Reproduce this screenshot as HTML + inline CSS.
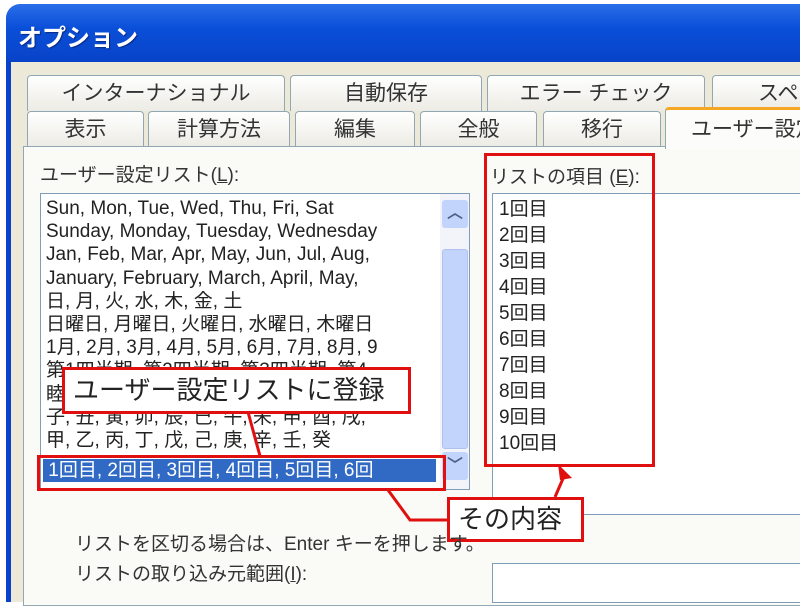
<!DOCTYPE html>
<html><head><meta charset="utf-8"><style>
*{margin:0;padding:0;box-sizing:border-box}
body{width:800px;height:600px;overflow:hidden;background:#fff;font-family:"Liberation Sans","Noto Sans CJK JP",sans-serif;position:relative;color:#222}
.abs{position:absolute}
.title{left:6px;top:4px;width:800px;height:60px;background:linear-gradient(#2a6ee8,#0a4fd8 40%,#0842c8);border-radius:14px 0 0 0}
.title span{position:absolute;left:12px;top:14px;color:#fff;font-weight:bold;font-size:24px;text-shadow:1px 1px 1px #0a2a80}
.body{left:6px;top:62px;width:800px;height:540px;background:#ECE9D8;border-left:5px solid #0842c8}
.tab{position:absolute;height:36px;background:linear-gradient(#fff,#ECEBE4);border:1px solid #91A7B4;border-bottom:none;border-radius:4px 4px 0 0;font-size:21px;text-align:center;line-height:36px;color:#333}
.panel{left:23px;top:146px;width:790px;height:460px;background:#FAFAF6;border:1px solid #91A7B4}
.lb{font-size:19px;line-height:23.2px;white-space:nowrap}
.box{border:1px solid #7F9DB9;background:#fff;overflow:hidden}
.red{border:3px solid #e01010}
</style></head><body>
<div class="abs title"><span>オプション</span></div>
<div class="abs body"></div>
<div class="tab" style="left:27px;top:75px;width:258px">インターナショナル</div>
<div class="tab" style="left:290px;top:75px;width:192px">自動保存</div>
<div class="tab" style="left:487px;top:75px;width:218px">エラー チェック</div>
<div class="tab" style="left:712px;top:75px;width:100px;text-align:left;padding-left:45px">スペ</div>
<div class="tab" style="left:27px;top:111px;width:117px">表示</div>
<div class="tab" style="left:148px;top:111px;width:142px">計算方法</div>
<div class="tab" style="left:295px;top:111px;width:120px">編集</div>
<div class="tab" style="left:420px;top:111px;width:117px">全般</div>
<div class="tab" style="left:543px;top:111px;width:118px">移行</div>
<div class="abs panel"></div>
<div class="tab" style="left:665px;top:107px;width:140px;height:42px;background:#FCFCFA;border-top:3px solid #F5A623;text-align:left;padding-left:25px;line-height:40px;white-space:nowrap;overflow:hidden">ユーザー設定</div>
<div class="abs lb" style="left:40px;top:164px;color:#333">ユーザー設定リスト(<u>L</u>):</div>
<div class="abs box" style="left:40px;top:193px;width:430px;height:297px">
<div class="lb" style="position:absolute;left:5px;top:3px;width:390px;overflow:hidden">
Sun, Mon, Tue, Wed, Thu, Fri, Sat<br>Sunday, Monday, Tuesday, Wednesday<br>Jan, Feb, Mar, Apr, May, Jun, Jul, Aug,<br>January, February, March, April, May,<br>日, 月, 火, 水, 木, 金, 土<br>日曜日, 月曜日, 火曜日, 水曜日, 木曜日<br>1月, 2月, 3月, 4月, 5月, 6月, 7月, 8月, 9<br>第1四半期, 第2四半期, 第3四半期, 第4<br>睦月, 如月, 弥生, 卯月, 皐月, 水無月, 文<br>子, 丑, 寅, 卯, 辰, 巳, 午, 未, 申, 酉, 戌,<br>甲, 乙, 丙, 丁, 戊, 己, 庚, 辛, 壬, 癸</div>
<div style="position:absolute;left:2px;top:265px;width:393px;height:23px;background:#316AC5;color:#fff" class="lb">&nbsp;1回目, 2回目, 3回目, 4回目, 5回目, 6回</div>
<div style="position:absolute;left:399px;top:0;width:30px;height:297px;background:#F3F4FA"></div>
<div style="position:absolute;left:401px;top:6px;width:26px;height:28px;background:#C3D4FC;border-radius:3px;text-align:center;color:#4D6185;font-weight:bold;line-height:28px">︿</div>
<div style="position:absolute;left:401px;top:55px;width:26px;height:200px;background:#C3D4FC;border-radius:3px;border:1px solid #B0C2EC"></div>
<div style="position:absolute;left:401px;top:258px;width:26px;height:28px;background:#C3D4FC;border-radius:3px;text-align:center;color:#4D6185;font-weight:bold;line-height:28px">﹀</div>
</div>
<div class="abs lb" style="left:490px;top:166px;color:#333">リストの項目 (<u>E</u>):</div>
<div class="abs box" style="left:492px;top:193px;width:320px;height:322px">
<div class="lb" style="position:absolute;left:6px;top:3px;line-height:26px">1回目<br>2回目<br>3回目<br>4回目<br>5回目<br>6回目<br>7回目<br>8回目<br>9回目<br>10回目</div></div>
<div class="abs red" style="left:484px;top:153px;width:171px;height:314px"></div>
<div class="abs red" style="left:37px;top:455px;width:409px;height:36px"></div>
<svg class="abs" style="left:0;top:0" width="800" height="600"><g stroke="#e01010" stroke-width="3" fill="none"><path d="M248 412 L260 456"/><path d="M388 490 L410 520 L448 520"/><path d="M555 497 L565 474"/></g><path d="M558 464 L572 478 L560 480Z" fill="#e01010"/></svg>
<div class="abs red" style="left:62px;top:367px;width:349px;height:47px;background:#fff;font-size:26px;line-height:41px;padding-left:8px;white-space:nowrap">ユーザー設定リストに登録</div>
<div class="abs red" style="left:447px;top:497px;width:137px;height:45px;background:#fff;font-size:26px;line-height:39px;padding-left:8px;white-space:nowrap">その内容</div>
<div class="abs lb" style="left:75px;top:533px;color:#333">リストを区切る場合は、Enter キーを押します。</div>
<div class="abs lb" style="left:75px;top:563px;color:#333">リストの取り込み元範囲(<u>I</u>):</div>
<div class="abs box" style="left:492px;top:563px;width:320px;height:40px"></div>
</body></html>
